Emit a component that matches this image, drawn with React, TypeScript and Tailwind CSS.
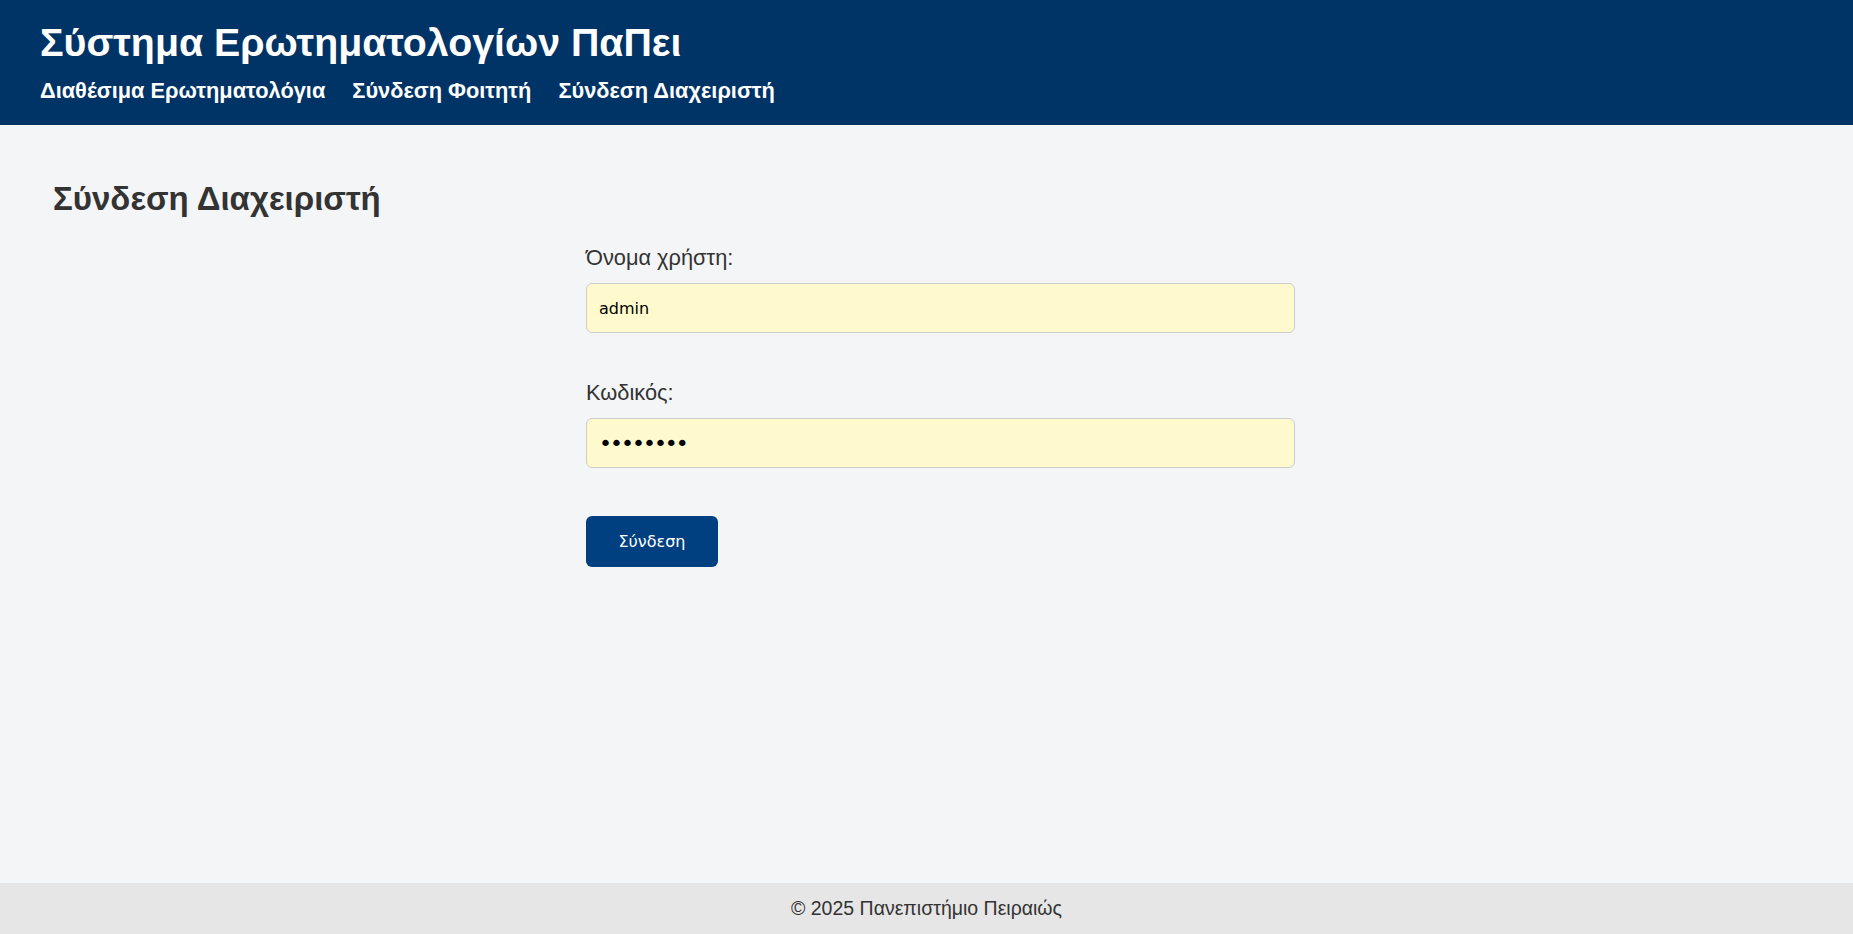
import React from 'react';

const sans = "font-['Liberation_Sans',Arial,sans-serif]";
const ctrl = "font-['DejaVu_Sans',Verdana,sans-serif]";

const NavLink: React.FC<{ children: React.ReactNode }> = ({ children }) => (
  <a href="#" className="text-white font-bold text-[21.8px] leading-[24px] no-underline">
    {children}
  </a>
);

const Field: React.FC<{ label: string; type: string; value: string; className?: string }> = ({ label, type, value, className = '' }) => (
  <div className={`flex flex-col ${className}`}>
    <label className="text-[21.8px] leading-[24px] text-[#333]">{label}</label>
    <input
      type={type}
      value={value}
      readOnly
      className={`mt-[13px] h-[50px] w-full rounded-md border border-[#ccc] bg-[#fffacd] px-3 text-black outline-none ${ctrl} ${
        type === 'password' ? 'text-[22px] tracking-[-2px]' : 'text-[16px]'
      }`}
    />
  </div>
);

export default function App() {
  return (
    <div className={`min-h-screen flex flex-col bg-[#f4f5f7] ${sans}`}>
      <header className="h-[125px] bg-[#003366] px-[40px] pt-[20px]">
        <h1 className="text-white font-bold text-[39.3px] leading-[45px]">Σύστημα Ερωτηματολογίων ΠαΠει</h1>
        <nav className="mt-[14px] flex gap-[27px]">
          <NavLink>Διαθέσιμα Ερωτηματολόγια</NavLink>
          <NavLink>Σύνδεση Φοιτητή</NavLink>
          <NavLink>Σύνδεση Διαχειριστή</NavLink>
        </nav>
      </header>

      <main className="flex-1 pt-[55px] pl-[53px] pr-[25px]">
        <h2 className="text-[33px] leading-[38px] font-bold text-[#333]">Σύνδεση Διαχειριστή</h2>
        <form className="mx-auto mt-[28px] w-[709px]" onSubmit={(e) => e.preventDefault()}>
          <Field label="Όνομα χρήστη:" type="text" value="admin" />
          <Field label="Κωδικός:" type="password" value="admin123" className="mt-[48px]" />
          <button
            type="submit"
            className={`mt-[48px] h-[51px] w-[132px] rounded-md bg-[#004080] text-white text-[16px] ${ctrl}`}
          >
            Σύνδεση
          </button>
        </form>
      </main>

      <footer className="h-[51px] bg-[#e6e6e6] flex items-center justify-center text-[19.5px] text-[#333]">
        © 2025 Πανεπιστήμιο Πειραιώς
      </footer>
    </div>
  );
}
